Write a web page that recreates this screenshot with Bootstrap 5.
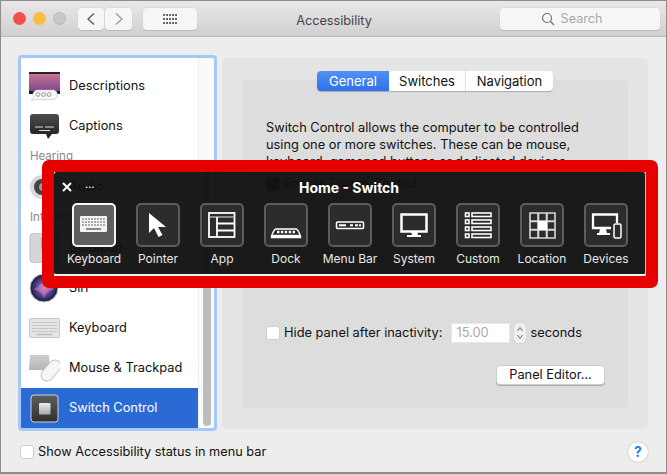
<!DOCTYPE html>
<html lang="en"><head><meta charset="utf-8"><title>Accessibility</title>
<link rel="stylesheet" href="https://cdn.jsdelivr.net/npm/bootstrap@5.3.0/dist/css/bootstrap.min.css">
<style>
html,body{width:667px;height:474px;overflow:hidden;margin:0}
body{font-family:Inter,"Liberation Sans",sans-serif;font-size:12.8px;color:#111;background:#888}
.dither{background-image:repeating-conic-gradient(rgba(255,255,255,.16) 0 25%,transparent 0 50%);background-size:2px 2px}
.mac-window{position:relative;width:667px;height:474px;background:#ededed;border:1px solid #8e8e8e;border-width:1px 1px 2px 1px;overflow:hidden}
.mac-toolbar{height:36px;flex:none;background-color:#d8d6d7;background-image:linear-gradient(#e9e7e8,#d1cfd0);border-bottom:1px solid #bdbbbc;padding:7px 6px 0 12px}
.light{width:13px;height:13px;border-radius:50%;flex:none;margin-top:4px}
.light-gap{margin-left:7px}
.tb-btn{height:22px;flex:none;background:#f7f6f6;border-radius:4px;box-shadow:0 1px 0 #bbb,0 0 0 .5px #d4d4d4;color:#555}
.tb-back{width:26px;margin-left:12px}
.tb-next{width:27px;margin-left:1px}
.tb-grid{width:54px;margin-left:11px}
.win-title{font-size:12.7px;color:#444;width:148px;flex:none;margin-left:63px;margin-right:92px;line-height:25px;text-align:center}
.search-box{width:160px;color:#a8a8a8;font-size:12.6px;gap:6px;padding-right:17px}
.mac-body{padding:18px 18px 0 17px;gap:5px}
.side-list{width:199px;height:376px;background:#fff;border:3px solid #a6c8f6;border-radius:4px;overflow:hidden;flex:none}
.side-rows{width:177px;padding-top:8px;flex:none}
.side-row{height:40px;padding-left:8px;gap:9px}
.side-row svg{flex:none}
.side-head{height:20px;padding-left:9px;font-size:11.5px;color:#888;line-height:20px;margin-bottom:1px}
.side-row.sel{background:#2a6ad5;color:#fff}
.side-track{width:16px;background:#fafafa;border-left:1px solid #eee;padding:112px 3px 2px 4px}
.side-thumb{background:#bdbdbd;border-radius:4px;width:8px;height:100%}
.outer-panel{width:426px;height:371px;margin-top:3px;background-color:#e2e2e2;border-radius:5px;padding:13px 20px 21px 21px}
.seg{width:236px;height:20px;margin:0 0 -11px 74px;position:relative;z-index:1;background:#fff;border-radius:4px;box-shadow:0 1px 1px #aaa;font-size:13px;line-height:20px;text-align:center;overflow:hidden;flex:none}
.seg-a{width:72px;background:linear-gradient(#5191f5,#2f70ea);color:#fff}
.seg-b{width:77px;border-right:1px solid #ddd}
.seg-c{flex:1}
.inner-panel{background-color:#dadada;border-radius:4px;padding:39px 0 0 23px;height:328px}
.copy{font-size:12.8px;line-height:17px;width:345px;margin:0}
.mac-check{width:14px;height:14px;margin:0;border:1px solid #cfcfcf;border-radius:3px;background:#fff;flex:none}
.mac-check.on{background:#4a78c8;border-color:#4a78c8}
.en-row{margin-top:6px;height:16px;gap:4px}
.hide-row{margin-top:131px;height:20px;gap:4px;font-size:12.85px}
.num-box{width:59px;height:20px;background:#fff;color:#aaa;padding-left:4px;line-height:18px;margin-left:5px;margin-right:0;border:1px solid #e8e8e8}
.step-box{width:12px;height:20px;background:#f0f0f0;border-radius:4px;box-shadow:0 0 1px #999}
.edit-btn{--bs-btn-font-size:12.8px;--bs-btn-padding-y:0;--bs-btn-padding-x:0;--bs-btn-color:#111;--bs-btn-bg:#fff;--bs-btn-border-color:#ccc;--bs-btn-border-radius:4px;width:109px;height:20px;margin:22px 0 0 230px;line-height:18px;box-shadow:0 1px 0 #aaa;display:block}
.mac-foot{padding:0 18px 0 19px;margin-top:10px;height:22px;gap:4px;font-size:12.75px}
.help-dot{width:20px;height:20px;border-radius:50%;background:#fff;box-shadow:0 0 1.5px #999;color:#2a7af0;font-weight:700;font-size:14px;text-align:center;line-height:20px;margin-left:auto}
.hud-frame{position:absolute;left:41px;top:159px;width:616px;height:128px;border:12px solid #e60000;border-radius:7px;z-index:5}
.hud-panel{height:104px;background:rgba(15,15,15,.95);border-radius:3px;border-bottom:2px solid #f2f2f2;border-right:1px solid #bbb;color:#fff;position:relative}
.hud-top{height:31px;font-weight:700;font-size:14px;line-height:31px;text-align:center;padding-right:1px}
.hud-x{position:absolute;left:8px;top:10px}
.hud-dots{position:absolute;left:31px;top:4px;font-size:11px;font-weight:400}
.hud-row{padding-left:8px}
.hud-cell{width:64px;flex:none}
.hud-key{width:44px;height:44px;border:2px solid #5d5d5d;background:#2c2c2c;border-radius:5px}
.hud-key.on{border-color:#f5f5f5;background:#5f5f5f}
.hud-key svg{display:block;width:40px;height:40px}
.hud-lbl{font-size:12px;line-height:16px;margin-top:4px;color:#e9e9e9;white-space:nowrap}
</style></head><body>
<div class="mac-window d-flex flex-column">
  <div class="mac-toolbar d-flex align-items-start">
    <div class="light" style="background:#f4504b"></div>
    <div class="light light-gap" style="background:#f9bd3e"></div>
    <div class="light light-gap" style="background:#c9c7c7;border:1px solid #b9b7b7"></div>
    <div class="tb-btn tb-back d-flex align-items-center justify-content-center"><svg width="10" height="14" viewBox="0 0 10 14"><path d="M8 1.500 2 7l6 5.500" fill="none" stroke="#555" stroke-width="1.300"/></svg></div>
    <div class="tb-btn tb-next d-flex align-items-center justify-content-center"><svg width="10" height="14" viewBox="0 0 10 14"><path d="M2 1.500 8 7l-6 5.500" fill="none" stroke="#999" stroke-width="1.300"/></svg></div>
    <div class="tb-btn tb-grid d-flex align-items-center justify-content-center"><svg width="15" height="11" viewBox="0 0 15 11" fill="#666"><rect x="0" y="0" width="2" height="2"/><rect x="3" y="0" width="2" height="2"/><rect x="6" y="0" width="2" height="2"/><rect x="9" y="0" width="2" height="2"/><rect x="12" y="0" width="2" height="2"/><rect x="0" y="4" width="2" height="2"/><rect x="3" y="4" width="2" height="2"/><rect x="6" y="4" width="2" height="2"/><rect x="9" y="4" width="2" height="2"/><rect x="12" y="4" width="2" height="2"/><rect x="0" y="8" width="2" height="2"/><rect x="3" y="8" width="2" height="2"/><rect x="6" y="8" width="2" height="2"/><rect x="9" y="8" width="2" height="2"/><rect x="12" y="8" width="2" height="2"/></svg></div>
    <div class="win-title">Accessibility</div>
    <div class="tb-btn search-box d-flex align-items-center justify-content-center"><svg width="14" height="14" viewBox="0 0 14 14"><circle cx="6" cy="6" r="4.500" fill="none" stroke="#777" stroke-width="1.200"/><path d="M9.300 9.300 13 13" stroke="#777" stroke-width="1.300"/></svg><span>Search</span></div>
  </div>
  <div class="mac-body d-flex">
    <div class="side-list d-flex">
      <div class="side-rows">
        <div class="side-row d-flex align-items-center"><svg width="31" height="30" viewBox="0 0 31 30"><defs><linearGradient id="pk" x1="0" y1="0" x2="0" y2="1"><stop offset="0" stop-color="#d27a93"/><stop offset="1" stop-color="#6d3f8e"/></linearGradient></defs><rect x="0" y="1" width="31" height="22" fill="url(#pk)"/><rect x="0" y="1" width="31" height="2" fill="#2a2226"/><rect x="0" y="20" width="31" height="3" fill="#1c181c"/><path d="M8 19h17a5 5 0 0 1 0 9.500H9l-7 1 2.500-3A5 5 0 0 1 8 19z" fill="#f6f6f6" stroke="#c4c4c4" stroke-width=".6"/><circle cx="9" cy="23.500" r="1.900" fill="none" stroke="#999"/><circle cx="14.500" cy="23.500" r="1.900" fill="none" stroke="#999"/><circle cx="20" cy="23.500" r="1.900" fill="none" stroke="#999"/></svg><span>Descriptions</span></div>
        <div class="side-row d-flex align-items-center"><svg width="31" height="26" viewBox="0 0 31 26"><defs><linearGradient id="cp" x1="0" y1="0" x2="0" y2="1"><stop offset="0" stop-color="#4d4d4d"/><stop offset="1" stop-color="#1d1d1d"/></linearGradient></defs><path d="M4 1h23a3 3 0 0 1 3 3v14a3 3 0 0 1-3 3h-4l-4 5-2-5H4a3 3 0 0 1-3-3V4a3 3 0 0 1 3-3z" fill="url(#cp)"/><path d="M6 14h8M16 14h9M10 17.500h11" stroke="#ddd" stroke-width="1"/></svg><span>Captions</span></div>
        <div class="side-head">Hearing</div>
        <div class="side-row d-flex align-items-center"><svg width="31" height="30" viewBox="0 0 31 30"><circle cx="13" cy="15" r="12" fill="#d8d8d8"/><circle cx="13" cy="15" r="8" fill="#444"/><circle cx="14" cy="15" r="4" fill="#999"/></svg><span>Audio</span></div>
        <div class="side-head">Interacting</div>
        <div class="side-row d-flex align-items-center"><svg width="31" height="30" viewBox="0 0 31 30"><rect x="1" y="0" width="29" height="30" rx="4" fill="#d5d5d5" stroke="#bbb"/><path d="M12 6a3 3 0 0 1 6 0v8a3 3 0 0 1-6 0z" fill="#aaa"/></svg><span>Dictation</span></div>
        <div class="side-row d-flex align-items-center"><svg width="31" height="30" viewBox="0 0 31 30"><defs><radialGradient id="sr"><stop offset="0" stop-color="#b7d9f7"/><stop offset=".45" stop-color="#5a4fb3"/><stop offset="1" stop-color="#15192e"/></radialGradient></defs><circle cx="15" cy="15" r="14" fill="url(#sr)" stroke="#ccc"/><path d="M4 16c6-1 9-6 11-10 2 5 5 9 11 10-6 1-9 4-11 9-2-5-5-8-11-9z" fill="#d56b9b" opacity=".75"/></svg><span>Siri</span></div>
        <div class="side-row d-flex align-items-center"><svg width="31" height="20" viewBox="0 0 33 20" preserveAspectRatio="none"><rect x=".5" y=".5" width="32" height="19" rx="1" fill="#e4e4e4" stroke="#c4c4c4"/><path d="M3 4.500h27M3 7.500h27M3 10.500h27M3 13.500h27" stroke="#bdbdbd" stroke-dasharray="2 .6"/><path d="M8 16.500h17" stroke="#bdbdbd" stroke-width="1.500"/></svg><span>Keyboard</span></div>
        <div class="side-row d-flex align-items-center"><svg width="31" height="27" viewBox="0 0 31 27"><defs><linearGradient id="tp" x1="0" y1="0" x2="0" y2="1"><stop offset="0" stop-color="#d0d0d0"/><stop offset="1" stop-color="#b4b4b4"/></linearGradient></defs><path d="M1 0h19l1 15H0z" fill="url(#tp)"/><rect x="16" y="3.500" width="12" height="24" rx="6" transform="rotate(40 22 15.500)" fill="#f6f6f6" stroke="#c2c2c2"/></svg><span>Mouse &amp; Trackpad</span></div>
        <div class="side-row sel d-flex align-items-center"><svg width="31" height="29" viewBox="0 0 31 29"><defs><linearGradient id="sw" x1="0" y1="0" x2="0" y2="1"><stop offset="0" stop-color="#5e5e5e"/><stop offset="1" stop-color="#2f2f2f"/></linearGradient><linearGradient id="sq" x1="0" y1="0" x2="0" y2="1"><stop offset="0" stop-color="#ececec"/><stop offset="1" stop-color="#a8a8a8"/></linearGradient></defs><rect x="2" y="1" width="27" height="27" rx="3" fill="url(#sw)" stroke="#d2d2d2"/><rect x="10" y="9" width="11.500" height="11.500" rx="1" fill="url(#sq)"/></svg><span>Switch Control</span></div>
      </div>
      <div class="side-track flex-grow-1"><div class="side-thumb"></div></div>
    </div>
    <div class="outer-panel dither d-flex flex-column">
      <div class="seg d-flex"><div class="seg-a">General</div><div class="seg-b">Switches</div><div class="seg-c">Navigation</div></div>
      <div class="inner-panel dither">
        <p class="copy">Switch Control allows the computer to be controlled using one or more switches. These can be mouse, keyboard, gamepad buttons or dedicated devices.</p>
        <div class="en-row d-flex align-items-center"><div class="mac-check on d-flex align-items-center justify-content-center"><svg width="10" height="10" viewBox="0 0 10 10"><path d="M1.500 5 4 8l4.500-6.500" fill="none" stroke="#111" stroke-width="1.600"/></svg></div><span>Enable Switch Control</span></div>
        <div class="hide-row d-flex align-items-center"><div class="mac-check"></div><span>Hide panel after inactivity:</span><div class="num-box">15.00</div><div class="step-box d-flex align-items-center justify-content-center"><svg width="8" height="16" viewBox="0 0 8 16"><path d="M1.500 6 4 2.500 6.500 6M1.500 10 4 13.500 6.500 10" fill="none" stroke="#666"/></svg></div><span>seconds</span></div>
        <button type="button" class="btn edit-btn">Panel Editor...</button>
      </div>
    </div>
  </div>
  <div class="mac-foot d-flex align-items-center"><div class="mac-check"></div><span>Show Accessibility status in menu bar</span><div class="help-dot">?</div></div>

  <div class="hud-frame">
    <div class="hud-panel">
      <svg class="hud-x" width="10" height="10" viewBox="0 0 10 10"><path d="M1 1l8 8M9 1l-8 8" stroke="#fff" stroke-width="2"/></svg>
      <div class="hud-dots">...</div>
      <div class="hud-top">Home - Switch</div>
      <div class="hud-row d-flex">
        <div class="hud-cell d-flex flex-column align-items-center"><div class="hud-key on"><svg viewBox="2 2 40 40"><rect x="8" y="13" width="27" height="16" rx="1" fill="#f4f4f4"/><path d="M10 16h23M10 19h23M10 22h23" stroke="#666" stroke-dasharray="2 1" stroke-width="1"/><path d="M14 26h15" stroke="#666" stroke-width="1.500"/></svg></div><div class="hud-lbl">Keyboard</div></div>
        <div class="hud-cell d-flex flex-column align-items-center"><div class="hud-key"><svg viewBox="2 2 40 40"><path d="M13 10v20l5-5 4.500 9 4-2-4.500-8h8z" fill="#fff"/></svg></div><div class="hud-lbl">Pointer</div></div>
        <div class="hud-cell d-flex flex-column align-items-center"><div class="hud-key"><svg viewBox="2 2 40 40" fill="none" stroke="#fff" stroke-width="1.800"><rect x="9" y="10" width="25.500" height="24"/><path d="M9 14h25.500" stroke-width="1.200" stroke="#ccc"/><path d="M17 14v20M17 20.500h17.500M17 27.500h17.500"/></svg></div><div class="hud-lbl">App</div></div>
        <div class="hud-cell d-flex flex-column align-items-center"><div class="hud-key"><svg viewBox="2 2 40 40"><path d="M12 26h20c2 0 3 4 4.500 7v1.500h-29V33C9 30 10 26 12 26z" fill="none" stroke="#fff" stroke-width="1.400"/><path d="M7.500 33h29" stroke="#fff" stroke-width="2.400"/><path d="M13 29h18" stroke="#fff" stroke-width="2.400" stroke-dasharray="2.400 1.500"/></svg></div><div class="hud-lbl">Dock</div></div>
        <div class="hud-cell d-flex flex-column align-items-center"><div class="hud-key"><svg viewBox="2 2 40 40"><rect x="8.500" y="19" width="27" height="6.500" rx="1" fill="none" stroke="#fff" stroke-width="1.500"/><path d="M11 22.300h7M22 22.300h3M27 22.300h3M31 22.300h2" stroke="#fff" stroke-width="2"/></svg></div><div class="hud-lbl">Menu Bar</div></div>
        <div class="hud-cell d-flex flex-column align-items-center"><div class="hud-key"><svg viewBox="2 2 40 40"><rect x="9.500" y="11.500" width="25" height="17" fill="none" stroke="#fff" stroke-width="2.500"/><path d="M19 28h6l1 4h-6z" fill="#fff"/><rect x="15" y="32" width="14" height="2" fill="#fff"/></svg></div><div class="hud-lbl">System</div></div>
        <div class="hud-cell d-flex flex-column align-items-center"><div class="hud-key"><svg viewBox="2 2 40 40" fill="none" stroke="#fff" stroke-width="1.600"><rect x="9.500" y="10" width="3.500" height="3.500"/><rect x="16" y="10" width="19" height="3.500"/><rect x="9.500" y="17" width="3.500" height="3.500"/><rect x="16" y="17" width="19" height="3.500"/><rect x="9.500" y="24" width="3.500" height="3.500"/><rect x="16" y="24" width="19" height="3.500"/><rect x="9.500" y="31" width="3.500" height="3.500"/><rect x="16" y="31" width="19" height="3.500"/></svg></div><div class="hud-lbl">Custom</div></div>
        <div class="hud-cell d-flex flex-column align-items-center"><div class="hud-key"><svg viewBox="2 2 40 40" fill="none" stroke="#d8d8d8" stroke-width="1.600"><path d="M10 10h8v8h-8zM18.500 10h8v8h-8zM27 10h8v8h-8zM10 18.500h8v8h-8zM27 18.500h8v8h-8zM10 27h8v8h-8zM18.500 27h8v8h-8zM27 27h8v8h-8z"/><rect x="18" y="18" width="9" height="9" fill="#fff" stroke="none"/></svg></div><div class="hud-lbl">Location</div></div>
        <div class="hud-cell d-flex flex-column align-items-center"><div class="hud-key"><svg viewBox="2 2 40 40"><path d="M27 25H9V11.500h24V20" fill="none" stroke="#fff" stroke-width="2.300"/><path d="M16 26h6l1 4h-8z" fill="#fff"/><rect x="13" y="30" width="13" height="2" fill="#fff"/><rect x="30" y="21" width="7" height="14" rx="1.500" fill="#2c2c2c" stroke="#fff" stroke-width="1.500"/></svg></div><div class="hud-lbl">Devices</div></div>
      </div>
    </div>
  </div>
</div>
</body></html>
